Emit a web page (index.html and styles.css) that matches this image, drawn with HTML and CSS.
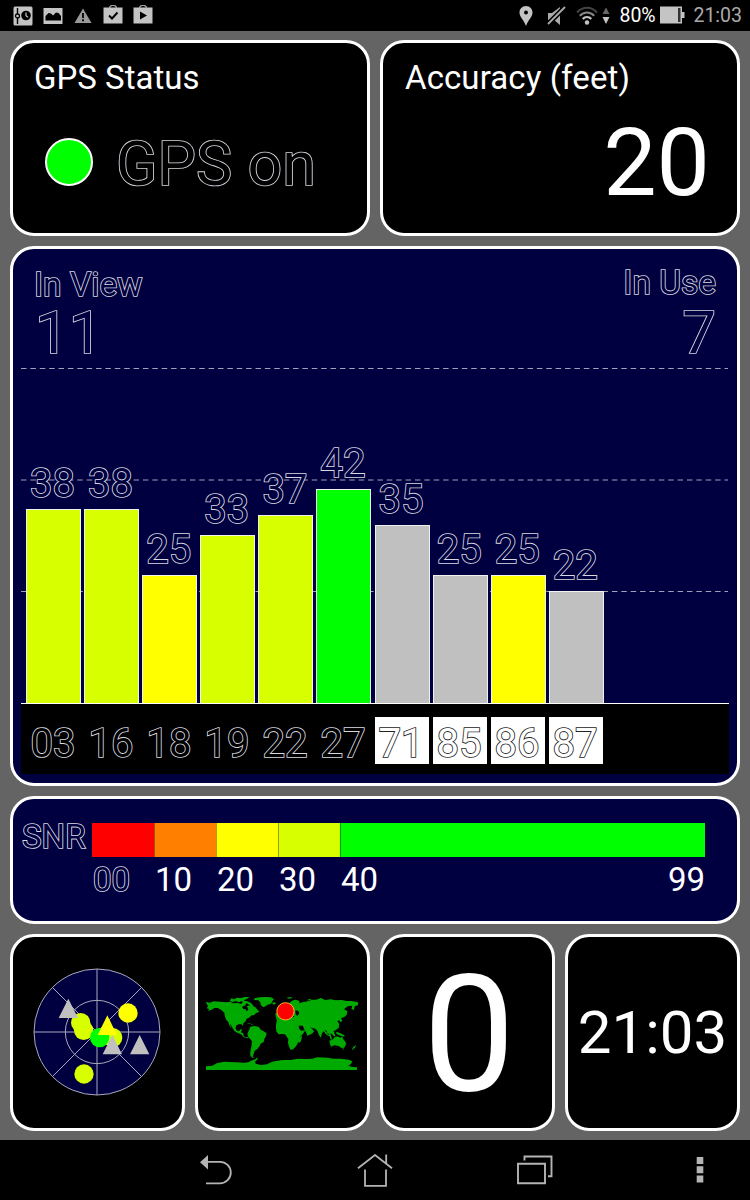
FILE: index.html
```html
<!DOCTYPE html>
<html lang="en">
<head>
    <meta charset="UTF-8">
    <meta name="viewport" content="width=device-width, initial-scale=1.0">
    <title>GPS Status</title>
    <link rel="stylesheet" href="styles.css">
</head>
<body>

    <header class="status-bar">
        <div class="status-left">
            <svg width="20" height="20" viewBox="0 0 20 20">
                <rect x="0.5" y="0.5" width="19" height="19" rx="1.5" fill="#c4c4c4"/>
                <path d="M4.5 2v16" stroke="#000" stroke-width="1.4"/>
                <circle cx="4.5" cy="10" r="2" fill="#c4c4c4" stroke="#000" stroke-width="1.3"/>
                <circle cx="13" cy="9.5" r="4.8" fill="#000"/>
                <path d="M13 6.5v3.3l2 1.5" fill="none" stroke="#c4c4c4" stroke-width="1.2"/>
            </svg>
            <svg width="20" height="20" viewBox="0 0 20 20">
                <rect x="0.5" y="2" width="19" height="16" fill="#c4c4c4"/>
                <path d="M2.500 14.500V10l3-3 2.500.5 2 2 3-3 2.500.5 2.500 3v4.500z" fill="#000"/>
            </svg>
            <svg width="20" height="20" viewBox="0 0 20 20">
                <path d="M10 2.500 18.500 17H1.500z" fill="#999"/>
                <path d="M10 7v5M10 13.300v2" stroke="#000" stroke-width="1.800"/>
            </svg>
            <svg class="bag" width="20" height="20" viewBox="0 0 20 20">
                <path d="M6.500 3.500C6.500-.8 13.500-.8 13.500 3.500" fill="none" stroke="#999" stroke-width="1.400"/>
                <rect x="0.500" y="2.500" width="19" height="16" fill="#c4c4c4"/>
                <path d="M6 10.500l3 3 5.500-6" fill="none" stroke="#000" stroke-width="2"/>
            </svg>
            <svg class="bag" width="20" height="20" viewBox="0 0 20 20">
                <path d="M6.500 3.500C6.500-.8 13.500-.8 13.500 3.500" fill="none" stroke="#999" stroke-width="1.400"/>
                <rect x="0.500" y="2.500" width="19" height="16" fill="#c4c4c4"/>
                <path d="M7 6.500v8l7-4z" fill="#000"/>
            </svg>
        </div>
        <div class="status-right">
            <svg class="pin" width="14" height="20" viewBox="0 0 14 20">
                <path d="M7 0C3 0 .5 3 .5 6.500.5 11 5 14 7 20 9 14 13.500 11 13.500 6.500 13.500 3 11 0 7 0z" fill="#c4c4c4"/>
                <circle cx="7" cy="6.500" r="2" fill="#000"/>
            </svg>
            <svg class="mute" width="20" height="20" viewBox="0 0 20 20">
                <path d="M1 7h4l8-6v18l-6-5H1z" fill="#aaa"/>
                <path d="M0 19 18 1" stroke="#000" stroke-width="5"/>
                <path d="M1 18 18 1" stroke="#aaa" stroke-width="1.800"/>
            </svg>
            <svg class="wifi" width="22" height="20" viewBox="0 0 22 20">
                <g fill="none" stroke-width="2">
                    <path d="M1 6.500C7 .3 15 .3 21 6.500" stroke="#444"/>
                    <path d="M3.800 9.800C8 5.500 14 5.500 18.200 9.800" stroke="#888"/>
                    <path d="M6.700 13C9 10.300 13 10.300 15.300 13" stroke="#c4c4c4"/>
                </g>
                <circle cx="11" cy="16.500" r="2.200" fill="#c4c4c4"/>
            </svg>
            <svg class="traffic" width="8" height="20" viewBox="0 0 8 20">
                <path d="M4 1.500 7.500 8h-7z" fill="#666"/>
                <path d="M4 18 7.500 11h-7z" fill="#c4c4c4"/>
            </svg>
            <span class="battery-text">80%</span>
            <svg class="battery" width="25" height="18" viewBox="0 0 25 18">
                <rect x="0" y="0.500" width="22" height="17" fill="#c4c4c4"/>
                <rect x="18" y="2" width="2.500" height="14" fill="#333"/>
                <rect x="22" y="6" width="2.500" height="6" fill="#c4c4c4"/>
            </svg>
            <span class="clock">21:03</span>
        </div>
    </header>

    <main class="dashboard">
        <section class="card status">
            <h2>GPS Status</h2>
            <div class="status-row">
                <span class="dot"></span>
                <span class="outline">GPS on</span>
            </div>
        </section>

        <section class="card accuracy">
            <h2>Accuracy (feet)</h2>
            <div class="accuracy-value">20</div>
        </section>

        <section class="card blue chart">
            <div class="chart-head outline">
                <div class="count">
                    <div class="count-label">In View</div>
                    <div class="count-value in-view">11</div>
                </div>
                <div class="count use">
                    <div class="count-label">In Use</div>
                    <div class="count-value in-use">7</div>
                </div>
            </div>
            <div class="plot">
                <svg class="gridlines" width="708" height="340">
                    <path d="M0 5.500H707M0 117H707M0 228.500H707" stroke="#a0a0b8" stroke-width="1.200" stroke-dasharray="5.500 3.880"/>
                </svg>
                <div class="col"><span class="outline">38</span><div class="bar lime" style="height: 194px"></div></div>
                <div class="col"><span class="outline">38</span><div class="bar lime" style="height: 194px"></div></div>
                <div class="col"><span class="outline">25</span><div class="bar yellow" style="height: 128px"></div></div>
                <div class="col"><span class="outline">33</span><div class="bar lime" style="height: 168px"></div></div>
                <div class="col"><span class="outline">37</span><div class="bar lime" style="height: 188px"></div></div>
                <div class="col"><span class="outline">42</span><div class="bar green" style="height: 214px"></div></div>
                <div class="col"><span class="outline">35</span><div class="bar gray" style="height: 178px"></div></div>
                <div class="col"><span class="outline">25</span><div class="bar gray" style="height: 128px"></div></div>
                <div class="col"><span class="outline">25</span><div class="bar yellow" style="height: 128px"></div></div>
                <div class="col"><span class="outline">22</span><div class="bar gray" style="height: 112px"></div></div>
            </div>
            <div class="ids">
                <span class="outline">03</span>
                <span class="outline">16</span>
                <span class="outline">18</span>
                <span class="outline">19</span>
                <span class="outline">22</span>
                <span class="outline">27</span>
                <span class="outline inverse">71</span>
                <span class="outline inverse">85</span>
                <span class="outline inverse">86</span>
                <span class="outline inverse">87</span>
            </div>
        </section>

        <section class="card blue snr">
            <div class="snr-label outline">SNR</div>
            <div class="snr-scale">
                <div class="snr-bar">
                    <div class="red"></div>
                    <div class="orange"></div>
                    <div class="yellow"></div>
                    <div class="lime"></div>
                    <div class="green"></div>
                </div>
                <div class="snr-ticks">
                    <span class="outline">00</span>
                    <span>10</span>
                    <span>20</span>
                    <span>30</span>
                    <span>40</span>
                    <span>99</span>
                </div>
            </div>
        </section>

        <section class="card tile">
            <svg width="128" height="128" viewBox="99 114 384 384">
                <circle cx="291" cy="306" r="189" fill="#000040"/>
                <g fill="none" stroke="#a9a9bd" stroke-width="3">
                    <circle cx="291" cy="306" r="189"/>
                    <circle cx="291" cy="306" r="95"/>
                    <path d="M291 117v378M102 306h378M157 172l268 268M425 172 157 440"/>
                </g>
                <g fill="#d8ff00">
                    <circle cx="242" cy="278" r="29"/>
                    <circle cx="251" cy="301" r="29"/>
                    <circle cx="338" cy="323" r="29"/>
                    <circle cx="252" cy="432" r="29"/>
                </g>
                <circle cx="384" cy="249" r="29" fill="#ff0"/>
                <circle cx="299" cy="323" r="29" fill="#0f0"/>
                <path d="M322 256l29 59h-58z" fill="#ff0"/>
                <path d="M205 206l29 58h-58zM337 315l29 58h-58zM419 315l29 58h-58z" fill="#c0c0c0"/>
            </svg>
        </section>

        <section class="card tile">
            <svg class="map" width="152" height="76" viewBox="34 30 456 228">
                <g fill="#00aa00">
                    <path d="M33 54l12 2 12-4 18 1 20 2 12-2 8 5 14-1 10 3 10-8 6 6-3 6-10 4 4 7 7 1 3 6 5-5-4-10 8-3 8 3 8 1 8 10 5 6-10 3-5 6-8 1-8 7-8 4-2 7-7 6-2 9-3-6-10 0-7 4-1 10 5 6 7-1 4-6 3 3-3 8 7 3 1 8 7 4 8 0-3 3-11-3-9-9-10-4-10-6-7-12-4-8-2 0 5 12-6-7-4-12-6-6-4-10-2-12-9-8-11-6-10 0-8 5-12 4 5-6-8-2 4-6z"/>
                    <path d="M105 51l5-8 9 3 7-5 14 1 9-3 15 0-7 6-9 3 3 6-11-2-8 3-9-4-9 3z"/>
                    <path d="M143 51l13 0 13 6 8 9-4 5-7-7-10-6-12-1z"/>
                    <path d="M180 43l15-3 18-1 16 1 9 5-5 7-4 7-10 3-9 6-4 2-7-6-2-9-6-6-13-1z"/>
                    <path d="M155 117l9 1 9 3 5 3-10-3z"/>
                    <path d="M167 128l12-2 14 3 5 8 9 5 9 6-2 8-5 9-2 9-9 5-5 10-6 7-7 4-3 9-3 9 6 4-7-1-6-6 0-11 3-16 2-16-5-6-6-7-3-9 3-7z"/>
                    <path d="M232 56l9-1 3 4-8 3zM246 77l6-5 4-6 6 11-12 5z"/>
                    <path d="M243 97l-1-9 10-1 7-7 11-7 8-9 14-14 10-3 13 4-2 7 13-4 14-2 12-5 12 0 15-5 12 6 17-2 15 3 18-1 14 3 15 0 18 3 13 5-8 4-12 3-4 12-7-3 3-10-14 2-11 9 10 5-2 12-8 7-9 2 4 8-5 5-5-7-5 4 6 8-2 12-10 7-6 3 6 13-4 3-5-8-6-2 6 21-6-5-4-13-5-9-6-4-10 9-3 14-6-7-5-14-6-6-11-2-7-4 11 9 3 6-9 8-11 4-3-9-8-13-2-8-9 0-8 1-3-5-5-8-6-4 2 9-8-8-8-1-8 7-6 9-7 2-7-2z"/>
                    <path d="M247 106l10-4 13-1 3 6 12 1 6 3 11-1 9 12 3 13 6 5 12-1-8 12-8 7-1 13-6 7-5 9-8 8-8 3-4-8-4-13 1-11-6-10-4-5-11-1-8 1-7-9-1-11 0-9z"/>
                    <path d="M319 154l3 5-4 14-5 3-1-8z"/>
                    <path d="M382 132l10 8 10 13 5 2-4 2-10-7zM396 139l9-7 4 5-4 12-8-3zM407 119l6 3 2 10-6-5zM413 142l6 2-2 10-6-4zM424 143l10 3 14 7 2 5-11-2-13-6z"/>
                    <path d="M404 170l9-3 7-7 9-3 8 5 5-5 5 10 6 7 1 7-5 10-9 1-8-6-13-2-10 4-3-9zM442 194l6-1-3 5z"/>
                    <path d="M474 193l4-6 6-4-3 8-9 8zM275 41l14-2 4 3-11 2zM335 50l8-5 9 0-7 3zM420 112l6-7 8-5 3-8 2 8-6 8-10 6z"/>
                    <path d="M33 247l20-2 15-8 22-4 30 2 28 1 13-1 8-5 13-4 6-6 1 6-8 7 2 6 16 4 18-2 12-6 14-4 21-3 24 0 22-4 25 1 18-1 15-4 29 1 21 3 20 0 25 3 10 5-4 8-8 5 12 4 14 1v8H33z"/>
                </g>
                <path d="M284 91l6 1 10 7-5 0-7-3zM302 79l9 2 3 7-6 8-5-5z" fill="#000"/>
                <circle cx="272.500" cy="82" r="26" fill="#f00" stroke="#ffb030" stroke-width="3"/>
            </svg>
        </section>

        <section class="card tile speed">0</section>
        <section class="card tile time">21:03</section>
    </main>

    <nav class="nav-bar">
        <svg class="back" width="34" height="34" viewBox="0 0 34 34">
            <path d="M1 8.300 9 1v14.500z" fill="#b4b4b4"/>
            <path d="M8 7.800h13a10.800 10.800 0 0 1 0 21.600H7" fill="none" stroke="#b4b4b4" stroke-width="1.800"/>
        </svg>
        <svg class="home" width="36" height="34" viewBox="0 0 36 34">
            <path d="M1 14.300 18 1l17 13.300M29.200 9.500V.5M8 15.500v16.300h21V15.500" fill="none" stroke="#b4b4b4" stroke-width="1.800"/>
        </svg>
        <svg class="recent" width="36" height="32" viewBox="0 0 36 32">
            <path d="M1 8.700h27v19.500H1zM7.500 5.500V1.500h27v19.700H31" fill="none" stroke="#b4b4b4" stroke-width="1.900"/>
        </svg>
        <svg class="menu" width="8" height="28" viewBox="0 0 8 28">
            <path d="M.7 0h6.600v7H.7zM.7 9.300h6.600v7H.7zM.7 18.600h6.600v7H.7z" fill="#b4b4b4"/>
        </svg>
    </nav>

</body>
</html>
```

FILE: styles.css
```css
* {
    box-sizing: border-box;
}

body {
    margin: 0;
    width: 750px;
    height: 1200px;
    background-color: #646464;
    color: white;
    font-family: Roboto, sans-serif;
    overflow: hidden;
}

svg {
    display: block;
    flex-shrink: 0;
}

.status-bar {
    display: flex;
    justify-content: space-between;
    height: 31px;
    padding: 6px 8px 0 13px;
    background: black;
}

.status-left {
    display: flex;
    gap: 10px;
}

.bag {
    margin-top: -1px;
}

.status-right {
    display: flex;
    font-size: 19.5px;
    line-height: 20px;
}

.mute {
    margin-left: 14px;
}

.wifi {
    margin-left: 9px;
}

.traffic {
    margin-left: 4px;
}

.battery-text {
    margin-left: 9px;
    width: 41px;
}

.clock {
    margin-left: 8px;
    color: #aaa;
}

.dashboard {
    display: grid;
    grid-template-columns: repeat(4, 1fr);
    grid-template-rows: 196px 540px 128px 197px;
    gap: 10px;
    height: 1109px;
    padding: 9px 10px 0;
}

.card {
    border: 3px solid white;
    border-radius: 24px;
    background: black;
}

/* hollow text: the fill hides the inner half of the stroke */
.outline {
    color: black;
    -webkit-text-stroke: 1.7px #d8d8e0;
    paint-order: stroke fill;
}

.blue {
    background: #000040;
}

.blue .outline {
    color: #000040;
}

.status, .accuracy {
    grid-column: span 2;
    padding: 16px 27px 0 21px;
}

h2 {
    margin: 0;
    font-size: 33px;
    line-height: 38px;
    font-weight: normal;
}

.accuracy h2 {
    padding-left: 1px;
    letter-spacing: 0.1px;
}

.status-row {
    display: flex;
    align-items: flex-start;
    margin: 32px 0 0 11px;
    font-size: 61px;
    line-height: 70px;
}

.dot {
    width: 48px;
    height: 48px;
    margin: 9px 23px 0 0;
    border: 2px solid white;
    border-radius: 50%;
    background: #00ff00;
}

.accuracy-value {
    margin-top: 16px;
    font-size: 95px;
    line-height: 100px;
    text-align: right;
}

.chart {
    grid-column: span 4;
    padding: 0 8px;
}

.chart-head {
    display: flex;
    justify-content: space-between;
    height: 114px;
    padding: 20px 13px 0 13px;
}

.count-label {
    font-size: 33.5px;
    line-height: 32px;
}

.count-value {
    margin-top: 2px;
    font-size: 60px;
    line-height: 60px;
}

.in-view {
    padding-left: 1px;
}

.in-use {
    margin-top: 4px;
}

.use {
    margin-top: -2px;
    text-align: right;
}

.plot {
    display: flex;
    align-items: flex-end;
    gap: 3.1px;
    position: relative;
    height: 341px;
    padding-left: 5px;
    border-bottom: 1px solid white;
}

.gridlines {
    position: absolute;
    left: 0;
    top: 0;
}

.col {
    position: relative;
    width: 55px;
    font-size: 40px;
    line-height: 40px;
}

.col span {
    display: block;
    padding-left: 4px;
    margin-bottom: 5px;
}

.bar {
    border: 1px solid #f0f0f0;
    border-bottom: none;
}

.red { background: #ff0000; }
.orange { background: #ff8000; }
.yellow { background: #ffff00; }
.lime { background: #d8ff00; }
.green { background: #00ff00; }
.gray { background: #c0c0c0; }

.ids {
    display: flex;
    align-items: flex-start;
    gap: 4px;
    height: 70px;
    padding: 13px 0 0 6px;
    background: black;
    font-size: 40px;
    line-height: 53px;
}

.ids span {
    width: 54px;
    height: 47px;
    padding-left: 3.5px;
}

.ids .outline {
    color: black;
}

.ids .inverse {
    color: white;
    background: white;
    -webkit-text-stroke-color: #222;
}

.snr {
    display: flex;
    grid-column: span 4;
    padding-top: 24px;
    font-size: 33px;
}

.snr-label {
    width: 79px;
    padding-left: 9px;
    line-height: 28px;
}

.snr-scale {
    width: 613px;
}

.snr-bar {
    display: grid;
    grid-template-columns: 62px 62px 62px 62px 1fr;
    height: 34px;
}

.snr-bar div + div {
    border-left: 1px solid rgba(0, 0, 0, 0.35);
}

.snr-ticks {
    display: grid;
    grid-template-columns: 62px 62px 62px 62px 1fr auto;
    padding-left: 1px;
    line-height: 46px;
}

.tile {
    display: flex;
    align-items: center;
    justify-content: center;
    padding: 0 2px 1px 0;
}

.speed {
    padding: 3px 0 0 3px;
    font-size: 164px;
    line-height: 188px;
}

.time {
    padding: 0;
    font-size: 60px;
}

.nav-bar {
    display: flex;
    height: 60px;
    padding: 14px 0 0 199px;
    background: black;
}

.home {
    margin-left: 124px;
}

.recent {
    margin: 1px 0 0 124px;
}

.menu {
    margin: 3px 0 0 143px;
}
```
